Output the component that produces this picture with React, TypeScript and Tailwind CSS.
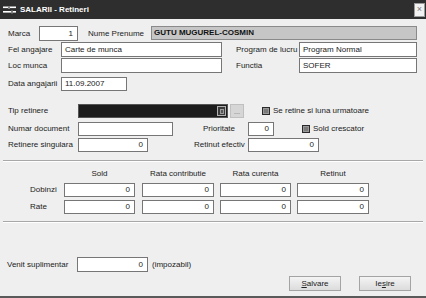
import React from "react";

const Input = ({
  w,
  h = 14,
  value = "",
  right = false,
}: {
  w: number;
  h?: number;
  value?: string;
  right?: boolean;
}) => (
  <div
    className={`flex items-center shrink-0 bg-white border border-[#767676] text-[#1a1a1a] leading-none ${right ? "justify-end pr-[4px]" : "pl-[3px]"}`}
    style={{ width: w, height: h }}
  >
    {value}
  </div>
);

const Check = () => (
  <div className="w-[8px] h-[8px] shrink-0 border border-[#2a2a2a] bg-[#7a7a7a] shadow-[inset_0_0_0_1px_#9a9a9a]" />
);

const Sep = () => (
  <div className="mx-[3px] h-[2px] border-t border-[#a8a8a8] border-b border-b-white" />
);

export default function App() {
  return (
    <div
      className="w-[426px] h-[298px] bg-[#efefef] flex flex-col text-[8px] text-[#222] overflow-hidden"
      style={{ fontFamily: '"Liberation Sans", Arial, sans-serif' }}
    >
      {/* Title bar */}
      <div className="h-[19px] shrink-0 bg-[#2e2e2e] flex items-center relative">
        <svg width="13" height="8" viewBox="0 0 13 8" className="ml-[3px]">
          <rect x="0" y="0.5" width="5" height="1.6" fill="#fff" />
          <rect x="7" y="0.5" width="6" height="1.6" fill="#fff" />
          <rect x="5.5" y="0" width="1" height="3" fill="#ddd" />
          <rect x="0" y="5" width="8" height="1.6" fill="#fff" />
          <rect x="10" y="5" width="3" height="1.6" fill="#fff" />
          <rect x="8.5" y="4.5" width="1" height="3" fill="#ddd" />
        </svg>
        <span className="ml-[4px] text-white font-bold leading-none">SALARII - Retineri</span>
        <div className="ml-auto mr-[1px] w-[11px] h-[14px] bg-[#f2f2f2] border border-[#9a9a9a] flex items-center justify-center text-[#777] text-[9px] leading-none">
          ×
        </div>
      </div>

      {/* Row 1 */}
      <div className="mt-[7px] h-[15px] flex items-center pl-[8px]">
        <div className="w-[31px]">Marca</div>
        <Input w={39} h={15} value="1" right />
        <div className="ml-[10px] w-[63px]">Nume Prenume</div>
        <div className="w-[266px] h-[14px] bg-[#c6c6c6] border border-[#8a8a8a] flex items-center pl-[2px] font-bold text-[#111] leading-none self-start">
          GUTU MUGUREL-COSMIN
        </div>
      </div>

      {/* Row 2 */}
      <div className="mt-[1px] h-[15px] flex items-center pl-[8px]">
        <div className="w-[53px]">Fel angajare</div>
        <Input w={161} h={15} value="Carte de munca" />
        <div className="w-[77px] pl-[14px]">Program de lucru</div>
        <Input w={118} h={15} value="Program Normal" />
      </div>

      {/* Row 3 */}
      <div className="mt-[1px] h-[15px] flex items-center pl-[8px]">
        <div className="w-[53px]">Loc munca</div>
        <Input w={161} h={15} />
        <div className="w-[77px] pl-[14px]">Functia</div>
        <Input w={118} h={15} value="SOFER" />
      </div>

      {/* Row 4 */}
      <div className="mt-[4px] h-[14px] flex items-center pl-[8px]">
        <div className="w-[53px]">Data angajarii</div>
        <Input w={66} h={14} value="11.09.2007" />
      </div>

      {/* Tip retinere */}
      <div className="mt-[13px] h-[14px] flex items-center pl-[8px]">
        <div className="w-[70px]">Tip retinere</div>
        <div className="w-[150px] h-[14px] bg-[#1c1c1c] border border-[#555] flex items-center justify-end pr-[1px]">
          <div className="w-[9px] h-[10px] border border-[#b0b0b0] bg-[#3a3a3a] flex items-center justify-center">
            <div className="w-[4px] h-[5px] border border-[#999] bg-[#555]" />
          </div>
        </div>
        <div className="ml-[2px] w-[14px] h-[14px] bg-[#d6d6d6] border border-[#c0c0c0] flex items-center justify-center text-[#666] text-[7px] leading-none">
          ...
        </div>
        <div className="ml-[18px]">
          <Check />
        </div>
        <div className="ml-[3px]">Se retine si luna urmatoare</div>
      </div>

      {/* Numar document */}
      <div className="mt-[4px] h-[14px] flex items-center pl-[8px]">
        <div className="w-[70px]">Numar document</div>
        <Input w={95} h={14} />
        <div className="w-[75px] pl-[30px]">Prioritate</div>
        <Input w={26} h={14} value="0" right />
        <div className="ml-[28px]">
          <Check />
        </div>
        <div className="ml-[3px]">Sold crescator</div>
      </div>

      {/* Retinere singulara */}
      <div className="mt-[2px] h-[14px] flex items-center pl-[8px]">
        <div className="w-[70px]">Retinere singulara</div>
        <Input w={70} h={14} value="0" right />
        <div className="w-[100px] pl-[46px]">Retinut efectiv</div>
        <Input w={71} h={14} value="0" right />
      </div>

      <div className="mt-[8px]">
        <Sep />
      </div>

      {/* Headers */}
      <div className="mt-[7px] h-[10px] flex items-center pl-[64px]">
        <div className="w-[71px] text-center">Sold</div>
        <div className="ml-[7px] w-[72px] text-center">Rata contributie</div>
        <div className="ml-[6px] w-[71px] text-center">Rata curenta</div>
        <div className="ml-[6px] w-[72px] text-center">Retinut</div>
      </div>

      {/* Dobinzi */}
      <div className="mt-[4px] h-[14px] flex items-center pl-[30px]">
        <div className="w-[34px]">Dobinzi</div>
        <Input w={71} value="0" right />
        <div className="ml-[7px]"><Input w={72} value="0" right /></div>
        <div className="ml-[6px]"><Input w={71} value="0" right /></div>
        <div className="ml-[6px]"><Input w={72} value="0" right /></div>
      </div>

      {/* Rate */}
      <div className="mt-[3px] h-[14px] flex items-center pl-[30px]">
        <div className="w-[34px]">Rate</div>
        <Input w={71} value="0" right />
        <div className="ml-[7px]"><Input w={72} value="0" right /></div>
        <div className="ml-[6px]"><Input w={71} value="0" right /></div>
        <div className="ml-[6px]"><Input w={72} value="0" right /></div>
      </div>

      <div className="mt-[7px]">
        <Sep />
      </div>

      {/* Venit */}
      <div className="mt-[34px] h-[15px] flex items-center pl-[7px]">
        <div className="w-[70px]">Venit suplimentar</div>
        <Input w={71} h={15} value="0" right />
        <div className="ml-[4px]">(impozabil)</div>
      </div>

      {/* Buttons */}
      <div className="mt-[4px] h-[15px] flex items-center pl-[289px]">
        <div className="w-[52px] h-[15px] border border-[#a4a4a4] bg-gradient-to-b from-[#f4f4f4] to-[#dcdcdc] flex items-center justify-center leading-none">
          <span><span className="underline">S</span>alvare</span>
        </div>
        <div className="ml-[18px] w-[52px] h-[15px] border border-[#a4a4a4] bg-gradient-to-b from-[#f4f4f4] to-[#dcdcdc] flex items-center justify-center leading-none">
          <span>Ie<span className="underline">s</span>ire</span>
        </div>
      </div>

      <div className="flex-1" />
      <div className="h-[2px] bg-[#5a5a5a]" />
    </div>
  );
}
